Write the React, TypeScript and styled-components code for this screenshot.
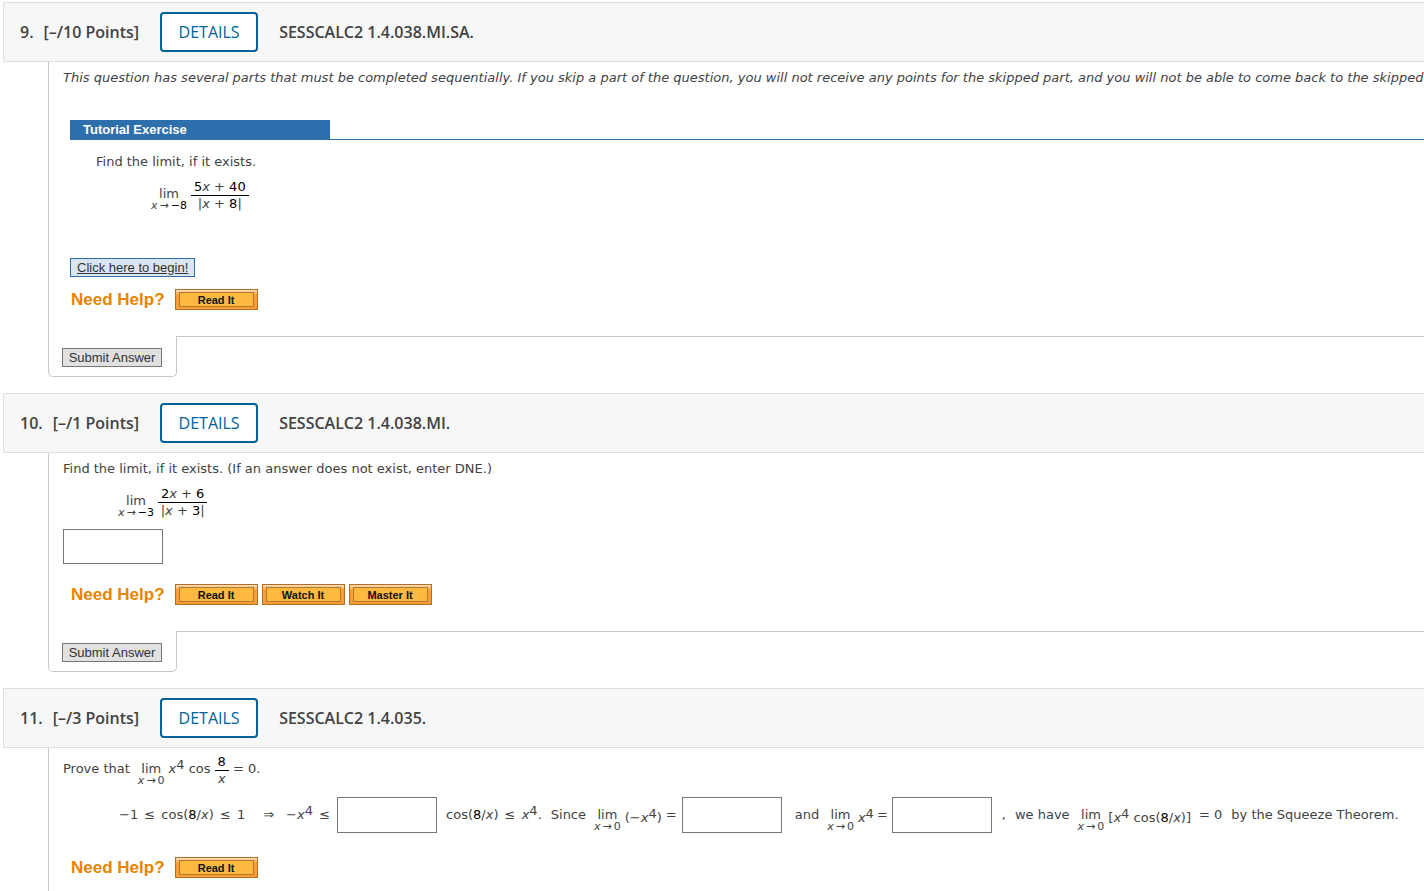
import React from "react";
import styled, { createGlobalStyle } from "styled-components";

const GlobalStyle = createGlobalStyle`
  *, *::before, *::after { box-sizing: border-box; }
  body {
    margin: 0;
    background: #fff;
    color: #424242;
    font: 13px/20px "DejaVu Sans", sans-serif;
    overflow-x: hidden;
  }
`;

const Page = styled.main`
  display: flex;
  flex-direction: column;
  gap: 16px;
  min-height: 100vh;
  padding-top: 2px;
  overflow: hidden;
`;

const Section = styled.section<{ $grow?: boolean }>`
  display: flex;
  flex-direction: column;
  flex: ${(p) => (p.$grow ? "1 0 auto" : "none")};
`;

const Header = styled.header`
  display: flex;
  align-items: center;
  height: 60px;
  margin-left: 3px;
  padding-left: 16px;
  background: #f7f7f7;
  border: 1px solid #dedede;
  border-right: 0;
  border-radius: 2px 0 0 2px;
  font: 600 16px/22px "Open Sans", sans-serif;
  white-space: nowrap;
`;

const QuestionNumber = styled.span`
  margin-right: 10px;
`;

const Points = styled.span`
  margin-right: 21px;
`;

const DetailsButton = styled.button`
  min-width: 98px;
  height: 40px;
  margin-right: 21px;
  padding: 0 16px;
  background: #fff;
  border: 2px solid #006298;
  border-radius: 4px;
  color: #006298;
  font: 400 16px/22px "Open Sans", sans-serif;
`;

const Title = styled.h2`
  margin: 0;
  font: inherit;
`;

const Body = styled.div<{ $tight?: boolean }>`
  flex: 1 0 auto;
  margin-left: 48px;
  padding: ${(p) => (p.$tight ? 3 : 6)}px 0 26px 14px;
  border-left: 1px solid #c8c8c8;
`;

const Prompt = styled.p`
  margin: 0;
  white-space: nowrap;
`;

const Notice = styled(Prompt)`
  font-style: italic;
`;

const Exercise = styled.div`
  margin: 32px 0 0 7px;
`;

const ExerciseHeading = styled.div`
  border-bottom: 1px solid #2d6eac;
`;

const ExerciseTitle = styled.h3`
  width: 260px;
  margin: 0;
  padding-left: 13px;
  background: #2d6eac;
  color: #fff;
  font: bold 13px/19px "Liberation Sans", sans-serif;
`;

const ExerciseText = styled.div`
  padding: 12px 0 0 26px;
`;

const MathRow = styled.div<{ $indent?: number }>`
  display: flex;
  align-items: center;
  padding-left: ${(p) => p.$indent ?? 0}px;
  white-space: nowrap;
`;

const Run = styled.span<{ $before?: number; $low?: boolean }>`
  flex: none;
  margin-left: ${(p) => p.$before ?? 0}px;
  padding-top: ${(p) => (p.$low ? 6 : 0)}px;
  white-space: pre;
`;

const Relation = styled.span`
  margin: 0 2px;
`;

const LimitBox = styled.span<{ $before?: number }>`
  display: flex;
  flex: none;
  flex-direction: column;
  align-items: center;
  margin-left: ${(p) => p.$before ?? 0}px;
  padding-top: 10px;
  line-height: 14px;
`;

const Approach = styled.span`
  font-size: 11px;
  line-height: 10px;
`;

const Arrow = styled.span`
  margin: 0 2px;
`;

const FractionBox = styled.span<{ $before?: number }>`
  display: flex;
  flex: none;
  flex-direction: column;
  align-items: center;
  margin-left: ${(p) => p.$before ?? 0}px;
  padding-top: 3px;
  line-height: 16px;
`;

const Numerator = styled.span`
  padding: 0 3px;
  border-bottom: 1px solid #000;
`;

const Num = styled.span`
  color: #000;
`;

const Power = styled.sup`
  font-size: 13px;
  line-height: 0;
  vertical-align: 4px;
`;

const AnswerBox = styled.input<{ $before?: number; $tall?: boolean }>`
  flex: none;
  display: block;
  width: 100px;
  height: ${(p) => (p.$tall ? 36 : 35)}px;
  margin: 0 0 0 ${(p) => p.$before ?? 0}px;
  padding: 0 6px;
  background: #fff;
  border: 1px solid #767676;
  border-radius: 0;
  font: inherit;
`;

const BeginButton = styled.button`
  display: block;
  height: 19px;
  padding: 0 6px;
  background: #d9e6f1;
  border: 1px solid #2d6eac;
  color: #333;
  font: 13px/17px "Liberation Sans", sans-serif;
  text-decoration: underline;
`;

const HelpRow = styled.div`
  display: flex;
  align-items: center;
  gap: 4px;
  height: 21px;
  padding-left: 8px;
`;

const HelpLabel = styled.span`
  margin-right: 6px;
  color: #e98300;
  font: bold 17px/20px "Liberation Sans", sans-serif;
`;

const HelpButton = styled.button`
  display: flex;
  width: 83px;
  height: 21px;
  padding: 2px 3px;
  background: linear-gradient(#ffe0c0, #fb9d36 5px);
  border: 1px solid #b36f2a;
`;

const HelpFace = styled.span`
  flex: 1;
  height: 15px;
  background: #fdb940;
  border: 1px solid #b37a2c;
  color: #111;
  font: bold 11px/15px "Liberation Sans", sans-serif;
`;

const Footer = styled.div`
  display: flex;
  margin-left: 48px;
`;

const SubmitTab = styled.div`
  width: 129px;
  height: 41px;
  padding: 12px 0 0 13px;
  border: 1px solid #c8c8c8;
  border-top: 0;
  border-radius: 0 0 5px 5px;
`;

const FooterRule = styled.div`
  flex: 1;
  border-top: 1px solid #c8c8c8;
`;

const SubmitButton = styled.button`
  display: block;
  width: 100px;
  height: 19px;
  padding: 0;
  background: #e1e1e1;
  border: 1px solid #767676;
  color: #333;
  font: 13px/17px "Liberation Sans", sans-serif;
`;

const Spacer = styled.div<{ $size: number }>`
  height: ${(p) => p.$size}px;
`;

function QuestionHeader(props: { number: number; points: number; title: string }) {
  return (
    <Header>
      <QuestionNumber>{props.number}.</QuestionNumber>
      <Points>[–/{props.points} Points]</Points>
      <DetailsButton type="button">DETAILS</DetailsButton>
      <Title>{props.title}</Title>
    </Header>
  );
}

function Limit(props: { to: React.ReactNode; before?: number }) {
  return (
    <LimitBox $before={props.before}>
      <span>lim</span>
      <Approach>
        <i>x</i>
        <Arrow>→</Arrow>
        {props.to}
      </Approach>
    </LimitBox>
  );
}

function Fraction(props: { top: React.ReactNode; bottom: React.ReactNode; before?: number }) {
  return (
    <FractionBox $before={props.before}>
      <Numerator>{props.top}</Numerator>
      <span>{props.bottom}</span>
    </FractionBox>
  );
}

function XPower() {
  return (
    <>
      <i>x</i>
      <Power>4</Power>
    </>
  );
}

function CosTerm() {
  return (
    <>
      cos(<Num>8</Num>/<i>x</i>)
    </>
  );
}

function Help({ items }: { items: string[] }) {
  return (
    <HelpRow>
      <HelpLabel>Need Help?</HelpLabel>
      {items.map((item) => (
        <HelpButton type="button" key={item}>
          <HelpFace>{item}</HelpFace>
        </HelpButton>
      ))}
    </HelpRow>
  );
}

function Submit() {
  return (
    <Footer>
      <SubmitTab>
        <SubmitButton type="button">Submit Answer</SubmitButton>
      </SubmitTab>
      <FooterRule />
    </Footer>
  );
}

export default function App() {
  return (
    <>
      <GlobalStyle />
      <Page>
        <Section>
          <QuestionHeader number={9} points={10} title="SESSCALC2 1.4.038.MI.SA." />
          <Body>
            <Notice>
              This question has several parts that must be completed sequentially. If you skip a
              part of the question, you will not receive any points for the skipped part, and you
              will not be able to come back to the skipped part.
            </Notice>
            <Exercise>
              <ExerciseHeading>
                <ExerciseTitle>Tutorial Exercise</ExerciseTitle>
              </ExerciseHeading>
              <ExerciseText>
                <Prompt>Find the limit, if it exists.</Prompt>
                <Spacer $size={4} />
                <MathRow $indent={55}>
                  <Limit to={<Num>−8</Num>} />
                  <Fraction
                    before={4}
                    top={<><Num>5</Num><i>x</i> + <Num>40</Num></>}
                    bottom={<>|<i>x</i> + <Num>8</Num>|</>}
                  />
                </MathRow>
              </ExerciseText>
              <Spacer $size={46} />
              <BeginButton type="button">Click here to begin!</BeginButton>
            </Exercise>
            <Spacer $size={12} />
            <Help items={["Read It"]} />
          </Body>
          <Submit />
        </Section>

        <Section>
          <QuestionHeader number={10} points={1} title="SESSCALC2 1.4.038.MI." />
          <Body>
            <Prompt>Find the limit, if it exists. (If an answer does not exist, enter DNE.)</Prompt>
            <Spacer $size={4} />
            <MathRow $indent={55}>
              <Limit to={<Num>−3</Num>} />
              <Fraction
                before={4}
                top={<><Num>2</Num><i>x</i> + <Num>6</Num></>}
                bottom={<>|<i>x</i> + <Num>3</Num>|</>}
              />
            </MathRow>
            <Spacer $size={10} />
            <AnswerBox aria-label="Limit value" />
            <Spacer $size={20} />
            <Help items={["Read It", "Watch It", "Master It"]} />
          </Body>
          <Submit />
        </Section>

        <Section $grow>
          <QuestionHeader number={11} points={3} title="SESSCALC2 1.4.035." />
          <Body $tight>
            <MathRow>
              <Run>Prove that</Run>
              <Limit before={8} to="0" />
              <Run $before={4}><XPower /> cos</Run>
              <Fraction before={4} top={<Num>8</Num>} bottom={<i>x</i>} />
              <Run $before={4}>= 0.</Run>
            </MathRow>
            <Spacer $size={10} />
            <MathRow $indent={56}>
              <Run>−1 <Relation>≤</Relation> <CosTerm /> <Relation>≤</Relation> 1</Run>
              <Run $before={18}>⇒</Run>
              <Run $before={12}>−<XPower /> <Relation>≤</Relation></Run>
              <AnswerBox $tall $before={5} aria-label="Lower bound" />
              <Run $before={9}><CosTerm /> <Relation>≤</Relation> <XPower />.</Run>
              <Run $before={9}>Since</Run>
              <Limit before={8} to="0" />
              <Run $before={4} $low>(−<XPower />)</Run>
              <Run $before={4}>=</Run>
              <AnswerBox $tall $before={5} aria-label="Limit of negative x to the fourth" />
              <Run $before={13}>and</Run>
              <Limit before={8} to="0" />
              <Run $before={4} $low><XPower /></Run>
              <Run $before={3}>=</Run>
              <AnswerBox $tall $before={4} aria-label="Limit of x to the fourth" />
              <Run $before={10}>,</Run>
              <Run $before={9}>we have</Run>
              <Limit before={8} to="0" />
              <Run $before={4} $low>[<XPower /> <CosTerm />]</Run>
              <Run $before={8}>= 0</Run>
              <Run $before={9}>by the Squeeze Theorem.</Run>
            </MathRow>
            <Spacer $size={24} />
            <Help items={["Read It"]} />
          </Body>
        </Section>
      </Page>
    </>
  );
}
